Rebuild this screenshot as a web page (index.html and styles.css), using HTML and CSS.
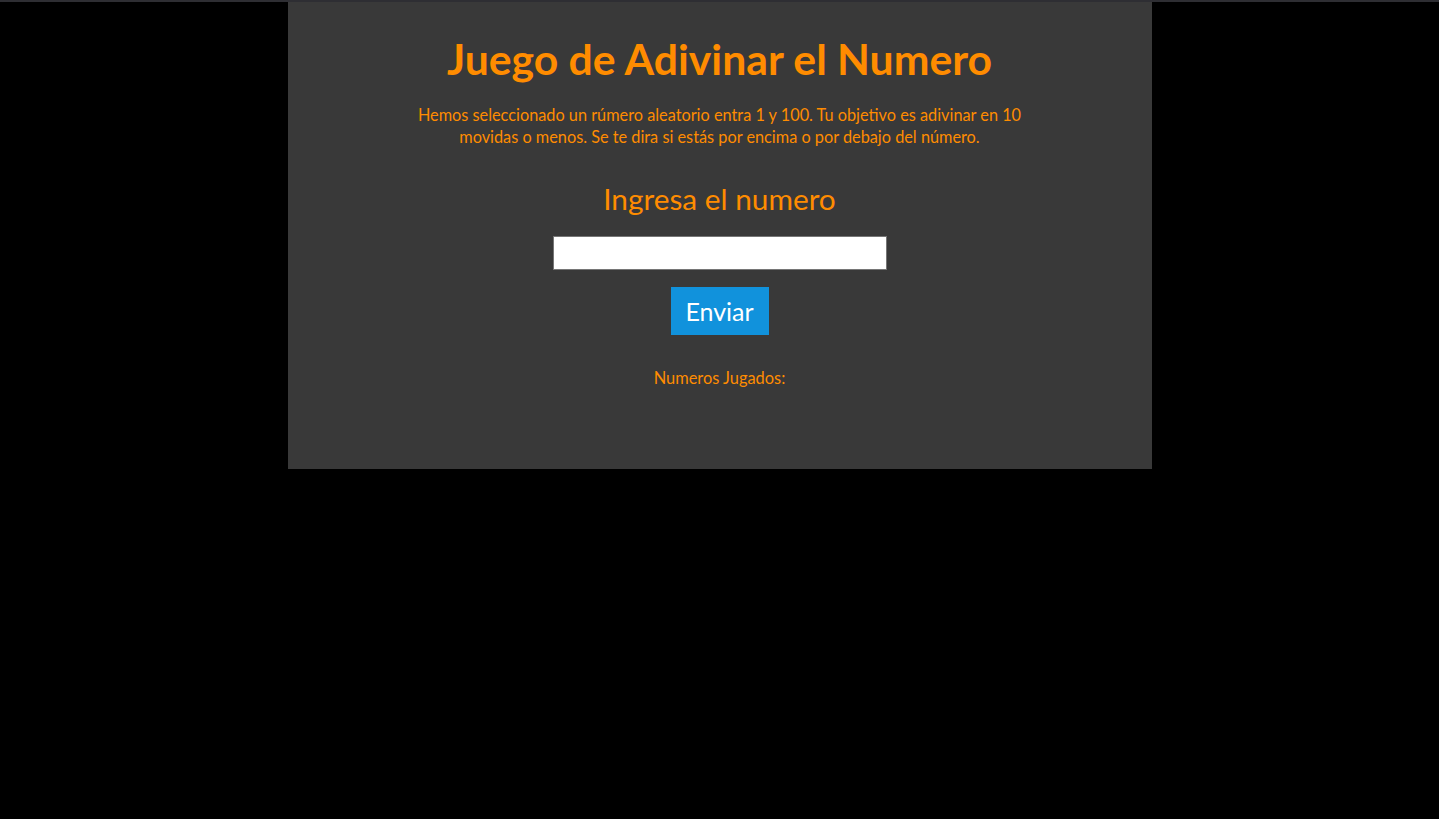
FILE: index.html
```html
<!DOCTYPE html>
<html lang="es">
<head>
<meta charset="utf-8">
<title>Juego de Adivinar el Numero</title>
<link rel="stylesheet" href="styles.css">
</head>
<body>
<main class="game">
  <h1 class="title">Juego de Adivinar el Numero</h1>
  <p class="intro">Hemos seleccionado un rúmero aleatorio entra 1 y 100. Tu objetivo es adivinar en 10 movidas o menos. Se te dira si estás por encima o por debajo del número.</p>
  <form class="guess-form">
    <label class="guess-label" for="guess">Ingresa el numero</label>
    <input class="guess-input" id="guess" type="text">
    <button class="guess-btn" type="button">Enviar</button>
  </form>
  <p class="played">Numeros Jugados:</p>
</main>
</body>
</html>
```

FILE: styles.css
```css
html, body {
  margin: 0;
  padding: 0;
  background: #000;
  height: 100%;
}
body {
  border-top: 2px solid #2e2e33;
  box-sizing: border-box;
  font-family: Lato, "Noto Sans", sans-serif;
  color: #ff8c00;
}
.game {
  width: 864px;
  margin: 0 auto;
  background: #393939;
  display: flex;
  flex-direction: column;
  align-items: center;
  padding: 34px 0 80px;
  box-sizing: border-box;
  height: 467px;
}
.title {
  margin: 0;
  font-size: 42.7px;
  font-weight: 700;
  line-height: 46px;
}
.intro {
  margin: 22px 0 0;
  max-width: 630px;
  text-align: center;
  font-size: 16.3px;
  line-height: 22px;
}
.guess-form {
  display: flex;
  flex-direction: column;
  align-items: center;
  margin-top: 34px;
}
.guess-label {
  font-size: 29.8px;
  line-height: 34px;
}
.guess-input {
  margin-top: 20px;
  width: 334px;
  height: 34px;
  box-sizing: border-box;
  border: 1px solid #767676;
  background: #fff;
  padding: 0 6px;
}
.guess-btn {
  margin-top: 17px;
  width: 98px;
  height: 48px;
  border: none;
  background: #1192dc;
  color: #fff;
  font-family: inherit;
  font-size: 25px;
}
.played {
  margin: 33px 0 0;
  font-size: 16.4px;
  line-height: 20px;
}
```
